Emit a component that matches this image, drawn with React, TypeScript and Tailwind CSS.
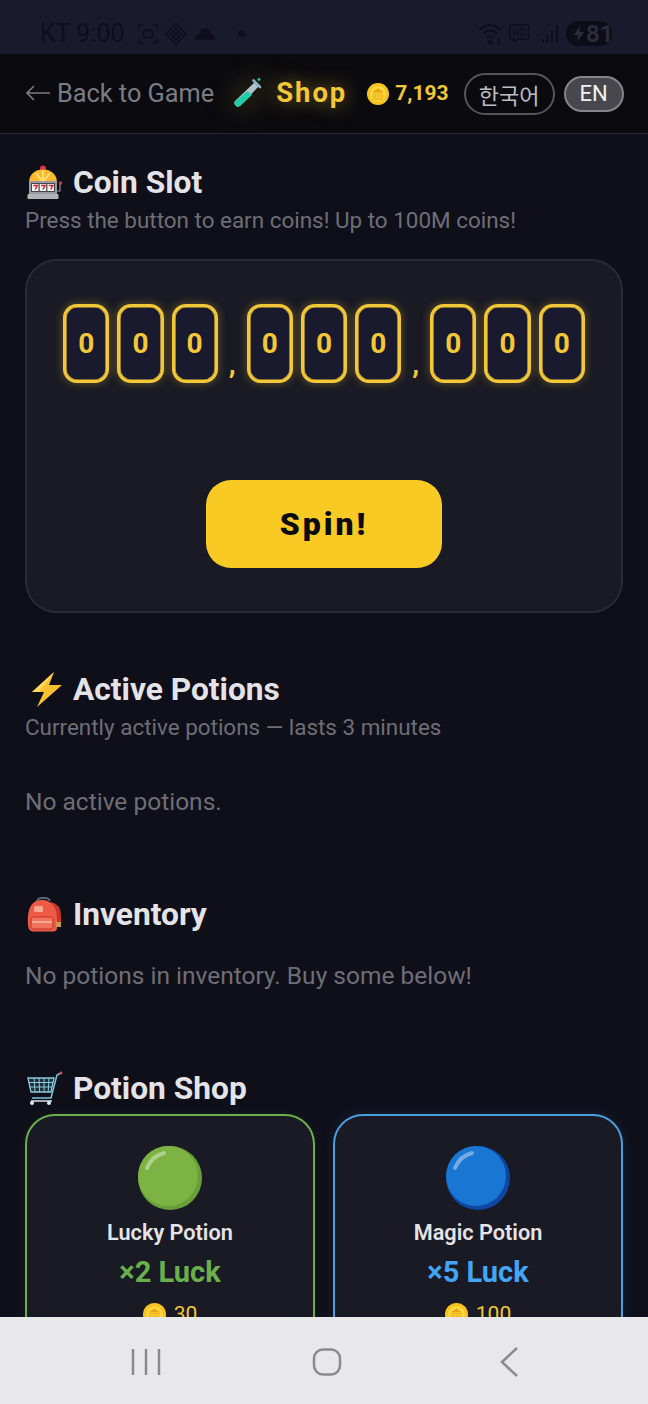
import React from "react";

const Coin = ({ size = 22 }: { size?: number }) => (
  <svg width={size} height={size} viewBox="0 0 32 32" className="shrink-0">
    <circle cx="16" cy="16" r="16" fill="#f9c51e" />
    <circle cx="16" cy="16" r="12.5" fill="#fdd73f" stroke="#f0b417" strokeWidth="0.8" />
    <path d="M8 13 L16 7.5 L24 13 Z" fill="#eaa60f" />
    <path d="M9 14.5h14M9.5 16v6M12.5 16v6M15.8 16v6M19 16v6M22.3 16v6M8.5 23.5h15" stroke="#eaa60f" strokeWidth="1.3" />
  </svg>
);

const TestTube = () => (
  <svg width="34" height="32" viewBox="0 0 34 32" className="shrink-0 drop-shadow-[0_0_14px_rgba(244,196,48,0.55)]">
    <path d="M26 5 L6 24 a3.6 3.6 0 0 0 5 5 L30 9 Z" fill="#c3d6e3" opacity="0.9" />
    <path d="M18.5 14 L6 24.5 a3.6 3.6 0 0 0 5 4.6 L23 18 Z" fill="#1fcfab" />
    <path d="M24.5 3.5 L31 10" stroke="#8fb0c4" strokeWidth="2.6" strokeLinecap="round" />
    <circle cx="30" cy="2.5" r="1.4" fill="#22c4a6" />
  </svg>
);

const SlotMachine = () => (
  <svg width="36" height="36" viewBox="0 0 36 36">
    <circle cx="16" cy="3.5" r="3" fill="#d9363e" />
    <path d="M2 18 C2 9 8 4.5 16 4.5 S30 9 30 18 Z" fill="#fbb92d" />
    <path d="M16 17 L9 8M16 17V6M16 17l7-9" stroke="#ffe17a" strokeWidth="2" />
    <rect x="2" y="16" width="28" height="13" fill="#9b9ca3" />
    <rect x="4" y="18" width="24" height="9" fill="#45454c" />
    <rect x="5" y="19" width="6.5" height="7" fill="#f4f4f4" />
    <rect x="12.7" y="19" width="6.5" height="7" fill="#f4f4f4" />
    <rect x="20.4" y="19" width="6.5" height="7" fill="#f4f4f4" />
    <path d="M6.3 20.5h4l-2 4M14 20.5h4l-2 4M21.7 20.5h4l-2 4" stroke="#d9262e" strokeWidth="1.5" fill="none" />
    <rect x="0.5" y="29" width="31" height="5" rx="1" fill="#b2b3b8" />
    <path d="M30 26h3v-7" stroke="#8e8f95" strokeWidth="1.2" fill="none" />
    <circle cx="33.5" cy="18" r="1.7" fill="#d9363e" />
  </svg>
);

const Bolt = () => (
  <svg width="32" height="36" viewBox="0 0 32 36">
    <path d="M23 0 L1 20 L13 20 L6 35 L31 13 L18 13 Z" fill="#fbc02d" />
    <path d="M23 0 L1 20 L8 20 Z" fill="#ffd95a" />
  </svg>
);

const Backpack = () => (
  <svg width="36" height="36" viewBox="0 0 36 36">
    <path d="M10 4 q1-3 5-3h3q4 0 5 3" stroke="#5d6672" strokeWidth="2" fill="none" />
    <path d="M24 5 q10 2 10 14v10h-5" fill="#c8352a" />
    <path d="M1 28 C0 14 3 3 15 3 C25 3 30 11 30 22 V31 Q30 34.5 26 34.5 H6 Q1.5 34.5 1 28 Z" fill="#ee5a45" />
    <rect x="7" y="9" width="9" height="6" rx="1.5" fill="#f9a68f" />
    <rect x="4" y="20" width="22" height="12" rx="2" fill="#f0735d" stroke="#c8352a" strokeWidth="1" />
    <path d="M5 25h20" stroke="#f9a68f" strokeWidth="2" />
    <rect x="29" y="25" width="5" height="5" fill="#c99a55" />
  </svg>
);

const Cart = () => (
  <svg width="36" height="36" viewBox="0 0 36 36">
    <path d="M34 2 L30 4 L24 27 H5" stroke="#7fc3d8" strokeWidth="1.5" fill="none" />
    <path d="M1 7 H27 L24 21 H4 Z" fill="#4d8ca1" fillOpacity="0.25" stroke="#8fcadd" strokeWidth="1.3" />
    <path d="M1.5 11.5H26M2.5 16H25M7 7l1 14M12 7l.6 14M17 7l.2 14M22 7l-.8 14" stroke="#8fcadd" strokeWidth="1" />
    <path d="M4 30 H25" stroke="#cfe6ee" strokeWidth="1.5" />
    <circle cx="5" cy="32" r="2" fill="#dbeef4" />
    <circle cx="22" cy="32" r="2" fill="#dbeef4" />
    <circle cx="34" cy="2" r="1.4" fill="#e0495a" />
  </svg>
);

const Digit = () => (
  <div className="flex h-[79px] w-[46.2px] items-center justify-center rounded-[14px] border-[3px] border-[#f2c738] bg-[#1a1a2e] text-[28px] font-bold text-[#f2c738] shadow-[inset_0_0_0_0.6px_#f2c738,0_0_10px_rgba(242,199,56,0.35)]">
    0
  </div>
);

const Comma = () => (
  <div className="flex h-[79px] w-[13px] items-end justify-center pb-[4px] text-[28px] font-bold leading-[30px] text-[#f2c738]">,</div>
);

const Title = ({ icon, text, className = "" }: { icon: React.ReactNode; text: string; className?: string }) => (
  <div className={`flex h-[40px] items-center gap-[10px] text-[31.7px] font-bold text-[#e4e4e8] ${className}`}>
    <div className="flex w-[38px] items-center justify-end">{icon}</div>
    <span>{text}</span>
  </div>
);

const PotionCard = ({
  cardClass,
  effectClass,
  ball,
  ballDark,
  name,
  effect,
  price,
}: {
  cardClass: string;
  effectClass: string;
  ball: string;
  ballDark: string;
  name: string;
  effect: string;
  price: string;
}) => (
  <div className={`flex h-[230px] flex-col items-center rounded-[30px] border-2 bg-[#1a1a24] pt-[30px] ${cardClass}`}>
    <svg width="64" height="64" viewBox="0 0 64 64">
      <circle cx="32" cy="32" r="32" fill={ballDark} />
      <circle cx="30" cy="30" r="30" fill={ball} />
      <path d="M9 22 Q14 10 26 7" stroke="#ffffff" strokeOpacity="0.4" strokeWidth="4" strokeLinecap="round" fill="none" />
    </svg>
    <div className="mt-[8px] h-[30px] text-[21.7px] font-semibold leading-[30px] text-[#e4e4e8]">{name}</div>
    <div className={`mt-[4px] h-[40px] text-[29px] font-bold leading-[40px] ${effectClass}`}>{effect}</div>
    <div className="mt-[7px] flex items-center gap-[8px] text-[21px] leading-[30px] text-[#f2c738]">
      <Coin size={23} />
      <span>{price}</span>
    </div>
  </div>
);

export default function App() {
  return (
    <div className="flex h-[1404px] w-[648px] flex-col overflow-hidden bg-[#0f0f1a] font-['Roboto',sans-serif]">
      {/* status bar */}
      <div className="flex h-[54px] shrink-0 items-center justify-between bg-[#1a1a2e] pl-[40px] pr-[36px] pt-[13px] text-[#0e0e1c]">
        <div className="flex items-center gap-[7px]">
          <span className="text-[25px] leading-none">KT 9:00</span>
          <svg width="20" height="20" viewBox="0 0 22 22" fill="none" stroke="currentColor" strokeWidth="2" className="ml-[6px]">
            <path d="M1 6V3q0-2 2-2h3M16 1h3q2 0 2 2v3M21 16v3q0 2-2 2h-3M6 21H3q-2 0-2-2v-3" />
            <rect x="6" y="7" width="10" height="8" rx="2" />
          </svg>
          <svg width="22" height="24" viewBox="0 0 22 24" fill="none" stroke="currentColor" strokeWidth="1.6">
            <path d="M11 1.5 L21 12 L11 22.5 L1 12 Z" />
            <path d="M11 6 L16.5 12 L11 18 L5.5 12 Z M8 9l6 6M14 9l-6 6" />
          </svg>
          <svg width="21" height="14" viewBox="0 0 22 14" fill="currentColor">
            <path d="M0 13 Q0 8 5 7.5 Q7 1 12 1 Q16 1 17 6 Q22 7 22 13 Z" />
          </svg>
          <span className="ml-[16px] h-[7px] w-[7px] rounded-full bg-current" />
        </div>
        <div className="flex items-center gap-[5px]">
          <svg width="26" height="26" viewBox="0 0 26 26" fill="none" stroke="currentColor" strokeWidth="2">
            <path d="M1 9 Q12 -1 23 9M5 13 Q12 6 19 13M9 17 Q12 14 15 17" />
            <circle cx="12" cy="21" r="1.6" fill="currentColor" />
            <path d="M21 17v6M19 21l2 2" strokeWidth="1.4" />
          </svg>
          <svg width="21" height="21" viewBox="0 0 21 21" fill="none" stroke="currentColor" strokeWidth="1.6">
            <path d="M3 2h15q2 0 2 2v10q0 2-2 2H9l-4 3v-3H3q-2 0-2-2V4q0-2 2-2Z" />
            <path d="M5 6v6M5 9h4M9 6v6M12 6v6h2q3 0 3-3t-3-3Z" strokeWidth="1.3" />
          </svg>
          <svg width="16" height="20" viewBox="0 0 16 20" fill="currentColor" className="ml-[7px]">
            <rect x="0" y="15" width="2" height="4" />
            <rect x="4.5" y="11" width="2" height="8" />
            <rect x="9" y="6" width="2" height="13" />
            <rect x="14" y="1" width="2" height="18" />
          </svg>
          <div className="ml-[3px] flex h-[25px] w-[46px] items-center rounded-[12px] bg-[#0d0d18] pl-[8px] text-[24px] font-semibold leading-none text-[#2c2c3d]">
            <svg width="10" height="16" viewBox="0 0 10 16" fill="#2c2c3d" className="mr-[2px] shrink-0">
              <path d="M6 0 L0 9h4l-1 7 7-10H5.5Z" />
            </svg>
            81
          </div>
        </div>
      </div>

      {/* header */}
      <div className="flex h-[80px] shrink-0 items-center whitespace-nowrap border-b border-[#2a2a33] bg-[#0a0a0f] pl-[26px]">
        <div className="flex shrink-0 items-center text-[25.3px] leading-none text-[#7c7c84]">
          <svg width="24" height="16" viewBox="0 0 24 16" fill="none" stroke="currentColor" strokeWidth="1.6" className="mr-[7px]">
            <path d="M24 8H1M8 1 L1 8 L8 15" />
          </svg>
          Back to Game
        </div>
        <div className="ml-[15px] flex shrink-0 items-center gap-[13px] [text-shadow:0_0_20px_rgba(242,199,56,0.6)]">
          <TestTube />
          <span className="text-[27.4px] font-bold tracking-[2px] text-[#f2c738]">Shop</span>
        </div>
        <div className="ml-[20px] flex shrink-0 items-center gap-[6px] text-[21px] font-bold text-[#f2c738]">
          <Coin />
          7,193
        </div>
        <div className="ml-[15px] flex shrink-0 items-center gap-[9px] text-[22px] leading-none">
          <div className="flex h-[42px] w-[91px] items-center justify-center rounded-full border-2 border-[#55555c] font-['Noto_Sans_CJK_KR',sans-serif] text-[#bdbdc2]">
            한국어
          </div>
          <div className="flex h-[36px] w-[60px] items-center justify-center rounded-full border-2 border-[#85858a] bg-[#47474d] text-[#f2f2f4]">
            EN
          </div>
        </div>
      </div>

      {/* main */}
      <div className="min-h-0 flex-1 overflow-hidden px-[25px] pt-[29px]">
        <Title icon={<SlotMachine />} text="Coin Slot" />
        <p className="mt-[2px] text-[22.45px] leading-[30px] text-[#6e6e76]">Press the button to earn coins! Up to 100M coins!</p>

        <div className="mt-[24px] flex h-[354px] flex-col items-center rounded-[32px] border-2 border-[#2a2a35] bg-[#1a1a24] pt-[43px]">
          <div className="flex gap-[8px]">
            <Digit />
            <Digit />
            <Digit />
            <Comma />
            <Digit />
            <Digit />
            <Digit />
            <Comma />
            <Digit />
            <Digit />
            <Digit />
          </div>
          <button className="mt-[97px] flex h-[88px] w-[236px] items-center justify-center rounded-[25px] bg-[#f9ca24] text-[32px] font-black tracking-[3px] text-[#0a0a0f]">
            Spin!
          </button>
        </div>

        <Title icon={<Bolt />} text="Active Potions" className="mt-[57px]" />
        <p className="mt-[2px] text-[22.45px] leading-[30px] text-[#6e6e76]">Currently active potions — lasts 3 minutes</p>
        <p className="mt-[45px] text-[24.5px] leading-[30px] text-[#6e6e76]">No active potions.</p>

        <Title icon={<Backpack />} text="Inventory" className="mt-[78px]" />
        <p className="mt-[26px] text-[24.5px] leading-[30px] text-[#6e6e76]">No potions in inventory. Buy some below!</p>

        <Title icon={<Cart />} text="Potion Shop" className="mt-[78px]" />
        <div className="mt-[5px] grid grid-cols-2 gap-[18px]">
          <PotionCard cardClass="border-[#6ab04c] shadow-[0_0_16px_rgba(106,176,76,0.08)]" effectClass="text-[#6ab04c]" ball="#7cb342" ballDark="#689f38" name="Lucky Potion" effect="×2 Luck" price="30" />
          <PotionCard cardClass="border-[#4a9fe0] shadow-[0_0_16px_rgba(74,159,224,0.12)]" effectClass="text-[#42a5f5]" ball="#1976d2" ballDark="#0d47a1" name="Magic Potion" effect="×5 Luck" price="100" />
        </div>
      </div>

      {/* nav bar */}
      <div className="flex h-[87px] shrink-0 items-center justify-between bg-[#e8e8ea] pl-[131px] pr-[129px] pt-[3px]">
        <svg width="30" height="28" viewBox="0 0 30 28" stroke="#8a8a8e" strokeWidth="2.5" fill="none">
          <path d="M2 1v26M15 1v26M28 1v26" />
        </svg>
        <svg width="30" height="28" viewBox="0 0 30 28" stroke="#8a8a8e" strokeWidth="2.5" fill="none" className="mr-[6px]">
          <rect x="2" y="1.5" width="26" height="25" rx="9" />
        </svg>
        <svg width="20" height="30" viewBox="0 0 20 30" stroke="#8a8a8e" strokeWidth="2.5" fill="none">
          <path d="M18 1 L3 15 L18 29" />
        </svg>
      </div>
    </div>
  );
}
